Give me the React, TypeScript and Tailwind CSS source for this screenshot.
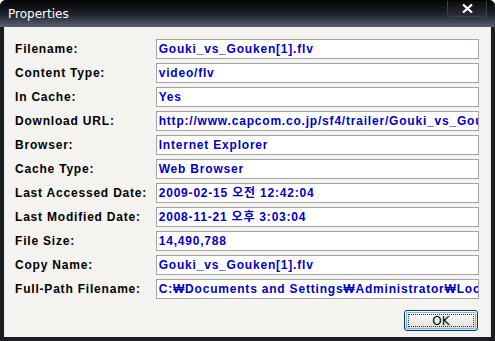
const rows: [string, string][] = [
  ['Filename:', 'Gouki_vs_Gouken[1].flv'],
  ['Content Type:', 'video/flv'],
  ['In Cache:', 'Yes'],
  ['Download URL:', 'http://www.capcom.co.jp/sf4/trailer/Gouki_vs_Gouken[1].flv'],
  ['Browser:', 'Internet Explorer'],
  ['Cache Type:', 'Web Browser'],
  ['Last Accessed Date:', '2009-02-15 오전 12:42:04'],
  ['Last Modified Date:', '2008-11-21 오후 3:03:04'],
  ['File Size:', '14,490,788'],
  ['Copy Name:', 'Gouki_vs_Gouken[1].flv'],
  ['Full-Path Filename:', 'C:₩Documents and Settings₩Administrator₩Local Settings₩Temp'],
];

export default function App() {
  return (
    <div
      className="w-[495px] h-[341px] flex flex-col overflow-hidden rounded-t-[6px] bg-[#1b1d22] px-[4px] pb-[4px]"
      style={{ fontFamily: '"Liberation Sans", "Noto Sans CJK KR", sans-serif' }}
    >
      {/* title bar */}
      <div className="h-[27px] -mx-[4px] flex items-start justify-between bg-gradient-to-b from-[#050505] via-[#1e2129] to-[#5b6172] pl-[8px] pr-[8px]">
        <span className="mt-[7px] text-[12px] leading-[15px] text-white" style={{ fontFamily: '"DejaVu Sans", sans-serif' }}>
          Properties
        </span>
        <div className="mt-[1px] w-[40px] h-[16px] rounded-b-[3px] border border-[#3c404a] border-t-0 bg-gradient-to-b from-[#0c0c0e] to-[#2c2f38] flex items-center justify-center">
          <svg width="11" height="9" viewBox="0 0 11 9">
            <path d="M1 0.5 L10 8.5 M10 0.5 L1 8.5" stroke="#fff" strokeWidth="2.2" />
          </svg>
        </div>
      </div>

      {/* client area */}
      <div className="flex-1 bg-[#f4f3ef] border-l border-r border-[#e8e8e4] pl-[10px] pr-[11px] pt-[12px] flex flex-col">
        <div className="flex flex-col gap-[4px]">
          {rows.map(([label, value]) => (
            <div key={label} className="flex items-center h-[20px]">
              <div className="w-[141px] text-[12px] font-bold text-black leading-[14px] tracking-[0.8px]">{label}</div>
              <div className="w-[324px] h-[20px] bg-white border border-[#a3a3a3] overflow-hidden whitespace-nowrap pl-[2px] text-[12px] font-bold text-[#0000c8] leading-[18px] tracking-[0.8px]">
                {value}
              </div>
            </div>
          ))}
        </div>
        <div className="flex justify-end mt-[11px] pr-[1px]">
          <div className="w-[74px] h-[21px] rounded-[3px] border border-[#003c74] bg-gradient-to-b from-[#ffffff] to-[#dcdcd6] p-[1px]">
            <div className="w-full h-full rounded-[2px] border border-[#7fb4e6] flex items-center justify-center">
              <div className="w-[66px] h-[13px] border border-dotted border-[#333] flex items-center justify-center text-[12px] text-black leading-[12px]" style={{ fontFamily: '"DejaVu Sans", sans-serif' }}>
                OK
              </div>
            </div>
          </div>
        </div>
      </div>
    </div>
  );
}
